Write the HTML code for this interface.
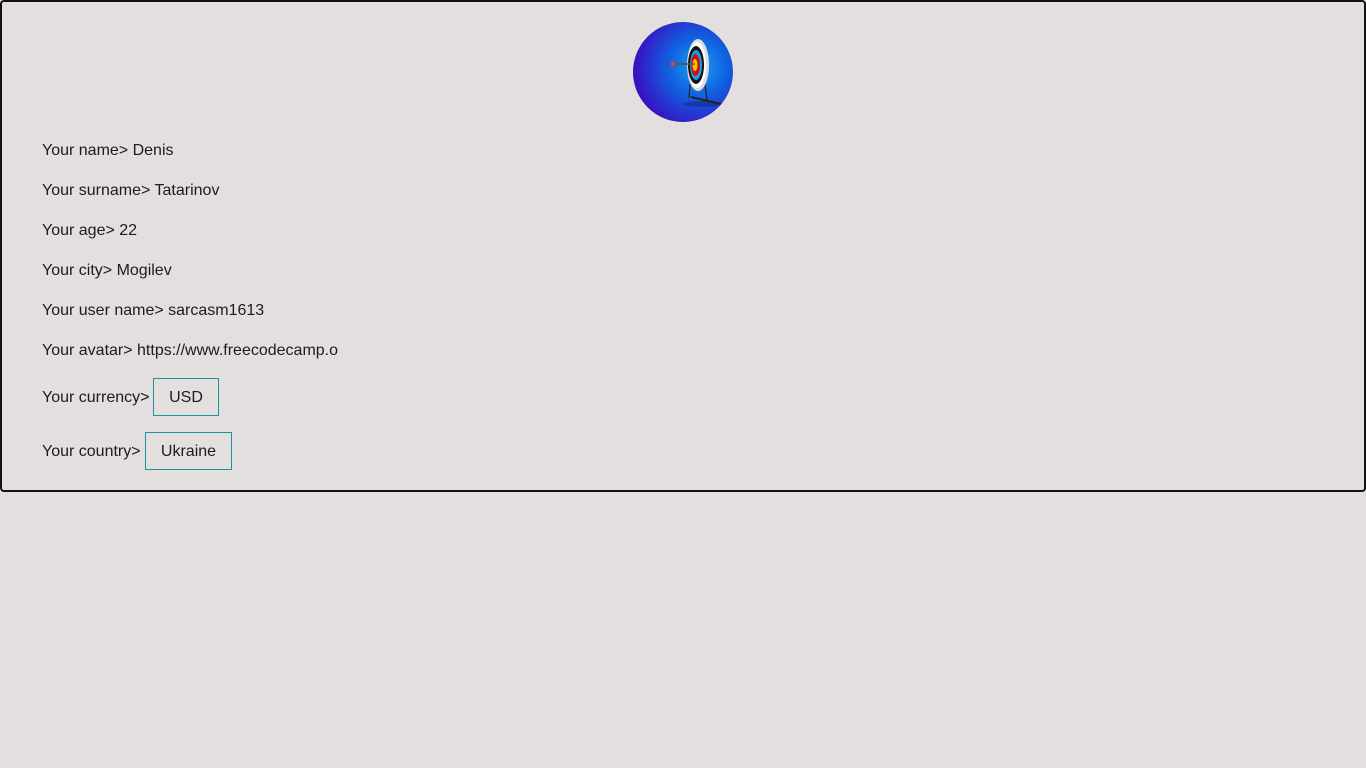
<!DOCTYPE html>
<html><head><style>
body{margin:0;background:#e2dfde;font-family:"Liberation Sans",sans-serif;font-size:16px;color:#1c1c1c;}
.box{position:absolute;left:0;top:0;width:1362px;height:488px;border:2px solid #111;border-radius:4px;}
.logo{position:absolute;left:633px;top:22px;width:100px;height:100px;border-radius:50%;background:radial-gradient(circle at 65% 45%,#1aa0f0 0%,#1060e0 35%,#3a10c0 75%,#5010a0 100%);overflow:hidden;}
.t{position:absolute;left:42px;white-space:nowrap;}
.b{position:absolute;border:1px solid #1a939f;height:36px;line-height:38px;text-align:center;}
</style></head><body>
<div class="box"></div>
<div class="logo"><svg width="100" height="100" viewBox="0 0 100 100">
<ellipse cx="70" cy="82" rx="20" ry="3" fill="#1a2a80" opacity=".6"/>
<line x1="57" y1="62" x2="56" y2="76" stroke="#222" stroke-width="1.2"/>
<line x1="72" y1="62" x2="74" y2="78" stroke="#222" stroke-width="1.2"/>
<line x1="58" y1="75" x2="88" y2="82" stroke="#222" stroke-width="2"/>
<ellipse cx="65" cy="43" rx="11" ry="26" fill="#ddd"/>
<ellipse cx="64" cy="43" rx="9" ry="23" fill="#fff"/>
<ellipse cx="63" cy="43" rx="8" ry="19" fill="#111"/>
<ellipse cx="63" cy="43" rx="6" ry="15" fill="#1a9ee0"/>
<ellipse cx="62.5" cy="43" rx="4.5" ry="11" fill="#d01010"/>
<ellipse cx="62" cy="43" rx="2.5" ry="6" fill="#f5c000"/>
<line x1="40" y1="42" x2="62" y2="42" stroke="#555" stroke-width="1.5"/>
<rect x="38" y="40" width="4" height="4" fill="#e04030"/>
</svg></div>
<div class="t" style="top:142px">Your name&gt; Denis</div>
<div class="t" style="top:182px">Your surname&gt; Tatarinov</div>
<div class="t" style="top:222px">Your age&gt; 22</div>
<div class="t" style="top:262px">Your city&gt; Mogilev</div>
<div class="t" style="top:302px">Your user name&gt; sarcasm1613</div>
<div class="t" style="top:342px">Your avatar&gt; https://www.freecodecamp.o</div>
<div class="t" style="top:389px">Your currency&gt;</div>
<div class="b" style="left:153px;top:378px;width:64px">USD</div>
<div class="t" style="top:443px">Your country&gt;</div>
<div class="b" style="left:145px;top:432px;width:85px">Ukraine</div>
</body></html>
